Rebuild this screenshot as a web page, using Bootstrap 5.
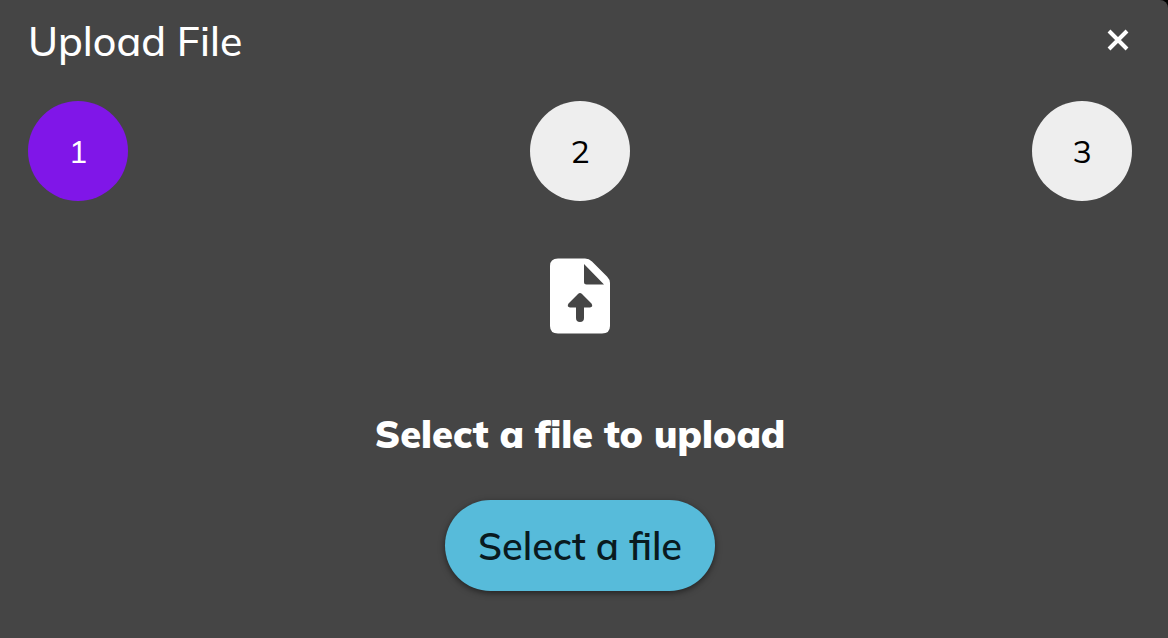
<!DOCTYPE html>
<html lang="en">
<head>
<meta charset="utf-8">
<meta name="viewport" content="width=device-width, initial-scale=1">
<title>Upload File</title>
<link href="https://cdn.jsdelivr.net/npm/bootstrap@5.3.0/dist/css/bootstrap.min.css" rel="stylesheet">
<style>
  body { background: #000; font-family: Mulish, Muli, Lato, "Open Sans", sans-serif; font-variant-ligatures: none; }
  .upload-panel { background: #454545; color: #fff; border-top-right-radius: 8px; padding: 16px 36px 40px 28px; }
  .upload-title { font-size: 41px; line-height: 50px; font-weight: 500; }
  .close-button { width: 28px; height: 28px; margin-top: 10px; color: #fff; line-height: 0; }
  .steps { margin-top: 35px; }
  .step { width: 100px; height: 100px; font-size: 32px; line-height: 40px; background: #eee; color: #000; }
  .step-active { background: #8016e8; color: #fff; }
  .upload-prompt { font-size: 38px; line-height: 48px; font-weight: 900; margin: 76px 0 42px; }
  .select-button { --bs-btn-bg: #57bbda; --bs-btn-color: #091a1f; --bs-btn-hover-bg: #48aecd; --bs-btn-hover-color: #091a1f;
    font-size: 38px; line-height: 48px; font-weight: 600; min-width: 270px; min-height: 91px;
    box-shadow: 0 2px 6px rgba(0,0,0,.5); }
</style>
</head>
<body>
<main class="upload-panel min-vh-100">
  <header class="d-flex justify-content-between align-items-start">
    <h1 class="upload-title mb-0">Upload File</h1>
    <button type="button" class="close-button btn border-0 p-0" aria-label="Close">
      <svg width="28" height="28" viewBox="0 0 28 28" fill="none" stroke="currentColor" stroke-width="4" aria-hidden="true"><path d="M5 5 23 23M23 5 5 23"/></svg>
    </button>
  </header>
  <ol class="steps list-unstyled d-flex justify-content-between mb-5">
    <li class="step step-active rounded-circle d-flex align-items-center justify-content-center" aria-current="step">1</li>
    <li class="step rounded-circle d-flex align-items-center justify-content-center">2</li>
    <li class="step rounded-circle d-flex align-items-center justify-content-center">3</li>
  </ol>
  <section class="d-flex flex-column align-items-center text-center pt-2">
    <svg width="60" height="77" viewBox="0 0 60 77" aria-hidden="true">
      <path fill="#fff" fill-rule="evenodd" d="M8 1.500H35Q39 1.500 42 4.500L57 19.500Q60 22.500 60 26V69Q60 76.500 52 76.500H8Q0 76.500 0 69V9Q0 1.500 8 1.500ZM34 7V25Q34 27.500 36.500 27.500H54ZM28 37 18.500 46.500Q16.500 50 20 50.500H26V61Q26 65 30 65T34 61V50.500H40Q43.500 50 41.500 46.500L32 37Q30 35 28 37Z"/>
    </svg>
    <h2 class="upload-prompt">Select a file to upload</h2>
    <button type="button" class="select-button btn border-0 rounded-pill">Select a file</button>
  </section>
</main>
<script src="https://cdn.jsdelivr.net/npm/bootstrap@5.3.0/dist/js/bootstrap.bundle.min.js"></script>
</body>
</html>
